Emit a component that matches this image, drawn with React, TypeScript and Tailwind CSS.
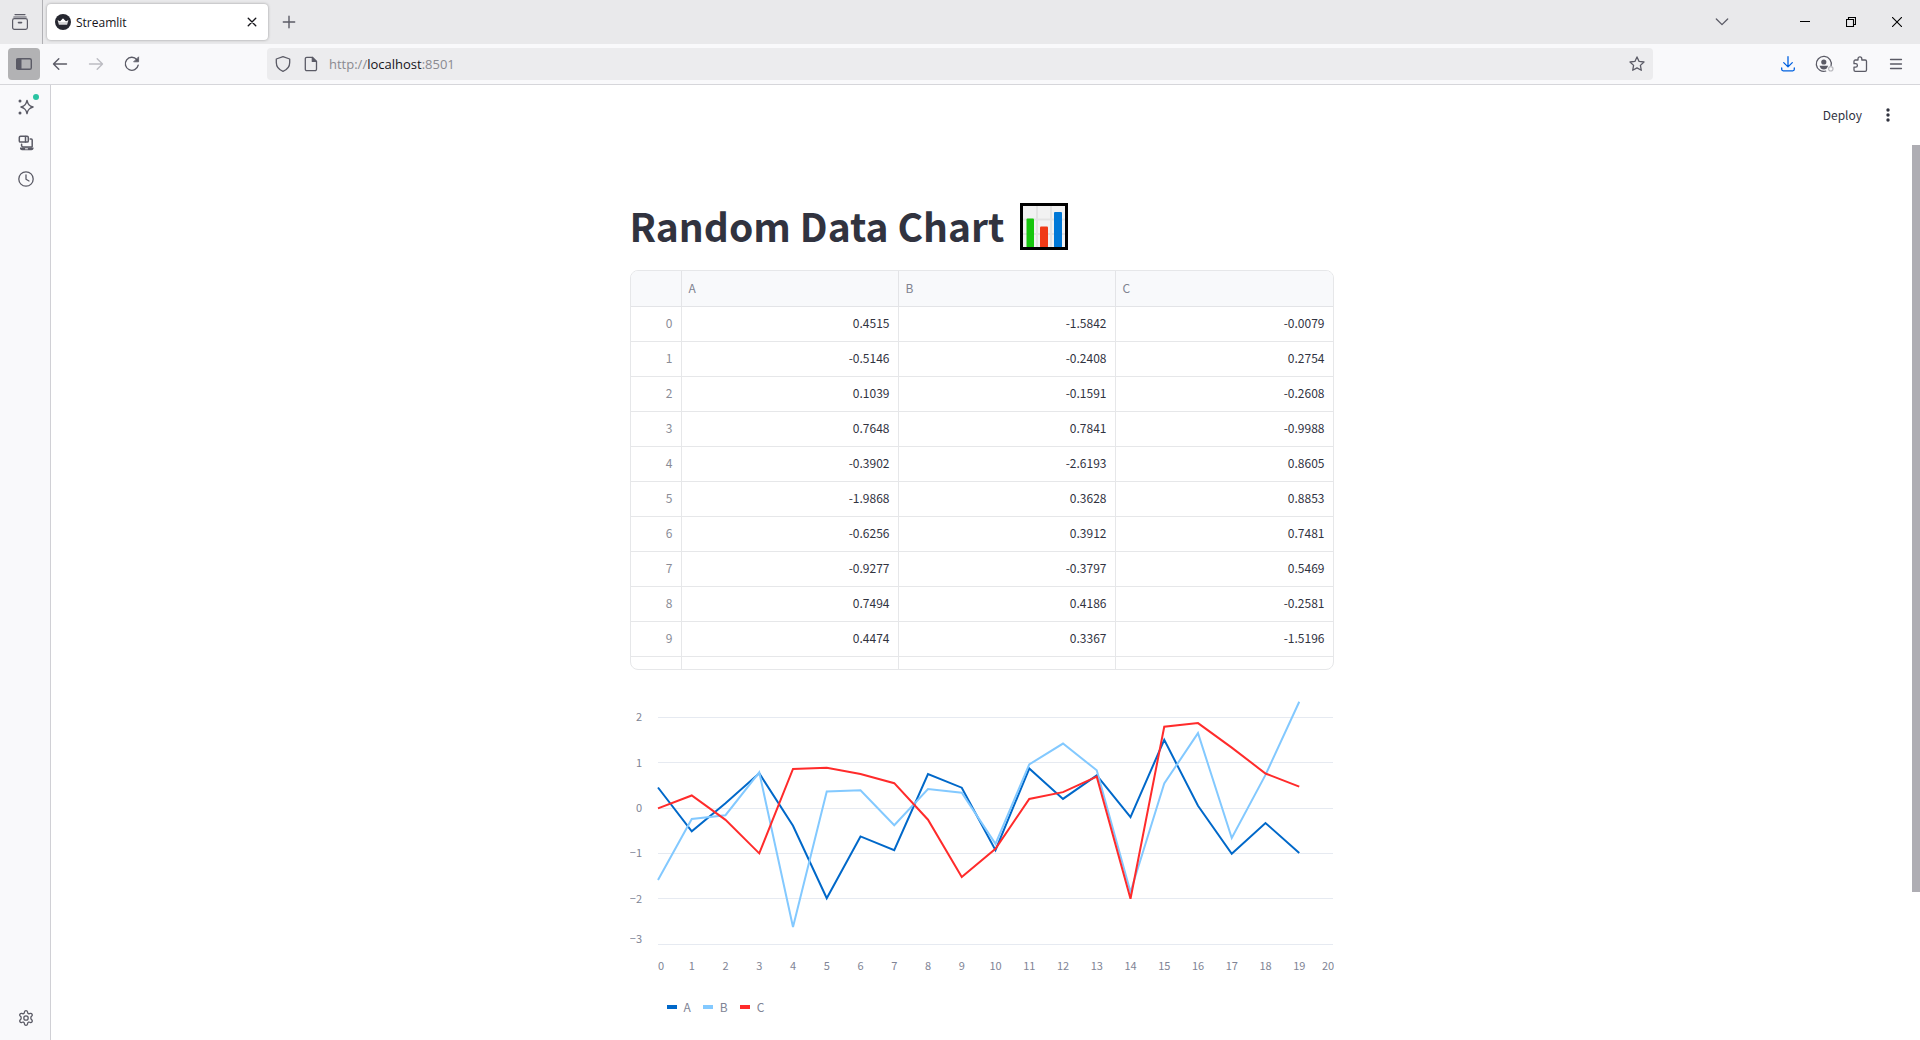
import type { ReactNode } from "react";

type Row = [number, number, number];

const data: Row[] = [
  [0.4515, -1.5842, -0.0079],
  [-0.5146, -0.2408, 0.2754],
  [0.1039, -0.1591, -0.2608],
  [0.7648, 0.7841, -0.9988],
  [-0.3902, -2.6193, 0.8605],
  [-1.9868, 0.3628, 0.8853],
  [-0.6256, 0.3912, 0.7481],
  [-0.9277, -0.3797, 0.5469],
  [0.7494, 0.4186, -0.2581],
  [0.4474, 0.3367, -1.5196],
  [-0.93, -0.79, -0.9],
  [0.87, 0.96, 0.2],
  [0.2, 1.42, 0.35],
  [0.72, 0.83, 0.69],
  [-0.2, -1.85, -2.0],
  [1.5, 0.54, 1.79],
  [0.05, 1.65, 1.87],
  [-1.01, -0.66, 1.33],
  [-0.33, 0.73, 0.76],
  [-0.99, 2.34, 0.47],
];

const columns = ["A", "B", "C"];
const series = [
  { name: "A", color: "#0068c9", swatch: "bg-[#0068c9]" },
  { name: "B", color: "#83c9ff", swatch: "bg-[#83c9ff]" },
  { name: "C", color: "#ff2b2b", swatch: "bg-[#ff2b2b]" },
];

function Icon({ children, size = 16, className = "" }: { children: ReactNode; size?: number; className?: string }) {
  return (
    <svg
      width={size}
      height={size}
      viewBox="0 0 16 16"
      fill="none"
      stroke="currentColor"
      strokeWidth="1.2"
      strokeLinecap="round"
      strokeLinejoin="round"
      aria-hidden="true"
      className={className}
    >
      {children}
    </svg>
  );
}

function IconButton({ label, children, className = "" }: { label: string; children: ReactNode; className?: string }) {
  return (
    <button type="button" aria-label={label} className={`flex size-8 shrink-0 items-center justify-center rounded ${className}`}>
      {children}
    </button>
  );
}

function TitleBar() {
  return (
    <div className="flex h-11 shrink-0 items-center bg-[#e9e9eb] text-[#5b5b66]">
      <div className="flex h-11 w-[43px] items-center justify-center border-r border-[#b0b0b4] pr-0.5">
        <IconButton label="Recent browsing">
          <Icon>
            <path d="M3 0.6h10M1.8 3h12.4" />
            <rect x="0.6" y="4.6" width="14.8" height="10.8" rx="1.8" />
            <path d="M6.5 8.6h3" strokeWidth="1.6" />
          </Icon>
        </IconButton>
      </div>
      <div className="ml-1 flex h-9 w-[221px] items-center rounded bg-white pl-2 shadow-[0_0_3px_rgba(0,0,0,0.35)]">
        <svg width="16" height="16" viewBox="0 0 16 16" aria-hidden="true">
          <circle cx="8" cy="8" r="8" fill="#262730" />
          <path d="M2.6 6.2 5 7.4 8 4.6l3 2.8 2.4-1.2-1.3 4.6H3.9z" fill="#d6d6d8" />
          <path d="M2.6 6.2 5 7.4 8 4.6l3 2.8 2.4-1.2L12 8H4z" fill="#fff" />
        </svg>
        <span className="ml-[5px] flex-1 pt-px font-['Open_Sans',sans-serif] text-xs text-[#15141a]">Streamlit</span>
        <IconButton label="Close tab" className="text-[#15141a]">
          <Icon size={10}>
            <path d="M2 2l12 12M14 2 2 14" strokeWidth="2.2" />
          </Icon>
        </IconButton>
      </div>
      <IconButton label="New tab" className="ml-[5px]">
        <Icon size={14}>
          <path d="M8 1.5v13M1.5 8h13" strokeWidth="1.6" />
        </Icon>
      </IconButton>
      <div className="flex-1" />
      <IconButton label="List all tabs" className="mr-[44px]">
        <Icon size={14}>
          <path d="M1.5 4.5 8 11l6.5-6.5" strokeWidth="1.5" />
        </Icon>
      </IconButton>
      <div className="flex text-black">
        <button type="button" aria-label="Minimize" className="flex h-11 w-[46px] items-center justify-center">
          <svg width="10" height="10" viewBox="0 0 10 10" aria-hidden="true">
            <path d="M0 4.5h10" stroke="currentColor" />
          </svg>
        </button>
        <button type="button" aria-label="Restore" className="flex h-11 w-[46px] items-center justify-center">
          <svg width="10" height="10" viewBox="0 0 10 10" fill="none" stroke="currentColor" aria-hidden="true">
            <path d="M0.5 2.5h7v7h-7zM2.5 2.5v-2h7v7h-2" strokeWidth="1.1" />
          </svg>
        </button>
        <button type="button" aria-label="Close" className="flex h-11 w-[46px] items-center justify-center">
          <svg width="10" height="10" viewBox="0 0 10 10" aria-hidden="true">
            <path d="M0 0l10 10M10 0 0 10" stroke="currentColor" strokeWidth="1.1" />
          </svg>
        </button>
      </div>
    </div>
  );
}

function Toolbar() {
  return (
    <div className="flex h-[41px] shrink-0 items-center border-b border-[#d6d6da] bg-[#f9f9fb] px-2 text-[#5b5b66]">
      <div className="flex w-[140px] shrink-0 items-center gap-1">
        <IconButton label="Toggle sidebar" className="bg-[#b2b2b4]">
          <Icon>
            <rect x="0.7" y="2.7" width="14.6" height="10.6" rx="1.6" strokeWidth="1.4" />
            <path d="M1 3h4v10H1z" fill="currentColor" strokeWidth="1" />
          </Icon>
        </IconButton>
        <IconButton label="Back">
          <Icon>
            <path d="M14.5 8H1.5M6.8 2.7 1.5 8l5.3 5.3" strokeWidth="1.4" />
          </Icon>
        </IconButton>
        <IconButton label="Forward" className="text-[#bcbcc2]">
          <Icon>
            <path d="M1.5 8h13M9.2 2.7 14.5 8l-5.3 5.3" strokeWidth="1.4" />
          </Icon>
        </IconButton>
        <IconButton label="Reload">
          <Icon>
            <path d="M14.2 9.2A6.5 6.5 0 1 1 12.8 3.6" strokeWidth="1.4" />
            <path d="M14.6 1.2v4.6H10z" fill="currentColor" strokeWidth="0.8" />
          </Icon>
        </IconButton>
      </div>
      <div className="mx-[119px] flex h-8 flex-1 items-center rounded bg-[#ececee] pl-2">
        <button type="button" aria-label="Tracking protection" className="mr-3">
          <Icon>
            <path d="M8 0.7 1.3 3v3.6c0 4 2.6 7.2 6.7 8.7 4.1-1.5 6.7-4.7 6.7-8.7V3z" strokeWidth="1.3" />
          </Icon>
        </button>
        <button type="button" aria-label="Site information" className="mr-[10px]">
          <Icon>
            <path d="M3.8 1.3h5.5l4.2 4.2v7.7a1.5 1.5 0 0 1-1.5 1.5H3.8a1.5 1.5 0 0 1-1.5-1.5V2.8a1.5 1.5 0 0 1 1.5-1.5z" strokeWidth="1.3" />
            <path d="M9.3 1.3v4.2h4.2z" fill="currentColor" />
          </Icon>
        </button>
        <label className="flex flex-1 items-center pt-0.5 font-['Open_Sans',sans-serif] text-[13px] text-[#8a8a90]">
          <span>http://</span>
          <input aria-label="Address" defaultValue="localhost" className="field-sizing-content bg-transparent text-[#15141a] outline-none" />
          <span>:8501</span>
        </label>
        <IconButton label="Bookmark this page">
          <Icon>
            <path d="m8 0.9 2.1 4.5 4.9.6-3.6 3.4.9 4.9L8 11.9l-4.3 2.4.9-4.9L1 6l4.9-.6z" strokeWidth="1.3" />
          </Icon>
        </IconButton>
      </div>
      <div className="flex shrink-0 items-center gap-1">
        <IconButton label="Downloads" className="text-[#0061e0]">
          <Icon>
            <path d="M8 0.7v10M3.7 6.6 8 10.9l4.3-4.3M1.7 12v1.3c0 .9.7 1.5 1.5 1.5h9.6c.8 0 1.5-.6 1.5-1.5V12" strokeWidth="1.3" />
          </Icon>
        </IconButton>
        <IconButton label="Account">
          <svg width="20" height="18" viewBox="0 0 20 18" fill="none" stroke="currentColor" aria-hidden="true">
            <path d="M17 11A7.5 7.5 0 1 0 12.200 16" strokeWidth="1.3" />
            <circle cx="9.800" cy="7" r="2.6" fill="currentColor" stroke="none" />
            <path d="M5.400 10.8h8.8l-1.500 2.6c-1.8 1.300-4 1.300-5.800 0z" fill="currentColor" stroke="none" />
            <circle cx="16.800" cy="13.800" r="2.200" stroke="#b9b9be" strokeWidth="1.200" />
          </svg>
        </IconButton>
        <IconButton label="Extensions">
          <Icon>
            <path
              d="M6 4V2.700a1.900 1.900 0 0 1 3.800 0V4h3.400a1.300 1.300 0 0 1 1.300 1.300v8.700a1.300 1.300 0 0 1-1.300 1.300H3.300A1.300 1.300 0 0 1 2 14v-2.900h1.700a1.700 1.700 0 0 0 0-3.400H2V5.300A1.300 1.300 0 0 1 3.300 4z"
              strokeWidth="1.300"
            />
          </Icon>
        </IconButton>
        <IconButton label="Menu">
          <Icon>
            <path d="M2.500 3.500h11M2.500 8h11M2.500 12.500h11" strokeWidth="1.300" />
          </Icon>
        </IconButton>
      </div>
    </div>
  );
}

function SideBar() {
  return (
    <nav aria-label="Sidebar" className="flex w-[51px] shrink-0 flex-col items-center gap-[4px] border-r border-[#d0d0d5] bg-[#f9f9fb] py-[6px] pl-[2px] text-[#5b5b66]">
      <IconButton label="Assistant" className="relative">
        <Icon>
          <path d="M9 1.500c.8 3.800 2 5.200 6 6.500-4 1.300-5.200 2.700-6 6.500-.8-3.800-2-5.200-6-6.500 4-1.300 5.200-2.700 6-6.500z" strokeWidth="1.500" />
          <circle cx="2" cy="1.900" r="1.500" fill="currentColor" stroke="none" />
          <circle cx="2" cy="14.100" r="1.500" fill="currentColor" stroke="none" />
        </Icon>
        <span className="absolute top-[3px] right-[3px] size-[6px] rounded-full bg-[#2ac3a2]" />
      </IconButton>
      <IconButton label="Synced tabs">
        <Icon>
          <rect x="1.300" y="1.300" width="9" height="5.800" rx="1.200" strokeWidth="1.500" />
          <path d="M7.500 1.500v5.500M12.200 4h1a1 1 0 0 1 1 1v6.500M3.600 9.200v1.800l1.200 1h9" strokeWidth="1.500" />
          <path d="M2 12.500h13.500v.8a2 2 0 0 1-2 2H4a2 2 0 0 1-2-2z" fill="currentColor" stroke="none" />
          <path d="M7.500 13.800h2" stroke="#f9f9fb" strokeWidth="1" />
        </Icon>
      </IconButton>
      <IconButton label="History">
        <Icon>
          <circle cx="8" cy="8" r="7.200" strokeWidth="1.300" />
          <path d="M8 3.800v4.400l3 1.800" strokeWidth="1.300" />
        </Icon>
      </IconButton>
      <div className="flex-1" />
      <IconButton label="Customize sidebar">
        <Icon>
          <path
            d="M6.500 1.800Q6.700.700 8 .700t1.500 1.100l.3 1.400 1.100.700 1.400-.500q1.100-.300 1.700.700t-.100 1.800l-1 1.100v1.900l1 1.100q.7.900.1 1.800t-1.700.7l-1.400-.5-1.100.7-.3 1.400Q9.300 15.300 8 15.300t-1.500-1.200l-.3-1.400-1.100-.7-1.400.5q-1.100.3-1.700-.7t.1-1.800l1-1.100V7l-1-1.100q-.7-.9-.1-1.800t1.700-.7l1.400.5 1.100-.7z"
            strokeWidth="1.300"
          />
          <circle cx="8" cy="8" r="2.200" strokeWidth="1.300" />
        </Icon>
      </IconButton>
    </nav>
  );
}

function BarChartGlyph() {
  return (
    <svg width="48" height="48" viewBox="0 0 48 48" role="img" aria-label="Bar chart">
      <rect x="1.500" y="1.500" width="45" height="44" fill="#f2f2f2" stroke="#000" strokeWidth="3" />
      <path d="M3 16.500h42M3 31h42M17 3v41M31 3v41" stroke="#e3e3e3" strokeWidth="2" />
      <rect x="6.500" y="15.500" width="7.500" height="29" rx="1" fill="#16c60c" />
      <rect x="20" y="23.500" width="8" height="21" rx="1" fill="#f03a17" />
      <rect x="34" y="9" width="8" height="35.500" rx="1" fill="#0078d7" />
      <path d="M0 45.500h48" stroke="#000" strokeWidth="3" />
    </svg>
  );
}

function DataTable() {
  return (
    <div className="h-[400px] overflow-hidden rounded-lg border border-[#e6e7e9]">
      <table className="w-full table-fixed border-separate border-spacing-0 text-xs">
        <thead>
          <tr className="h-9 bg-[#f8f9fb] text-left text-[#808390]">
            <th scope="col" aria-label="Index" className="w-[51px] border-r border-b border-[#e3e4e7]" />
            {columns.map((name) => (
              <th key={name} scope="col" className="border-b border-[#e3e4e7] px-[7px] pb-0.5 font-normal not-last:border-r">
                {name}
              </th>
            ))}
          </tr>
        </thead>
        <tbody>
          {data.slice(0, 11).map((row, index) => (
            <tr key={index} className="h-[35px] text-right text-[#31333f]">
              <th scope="row" className="border-r border-b border-[#e6e7e9] px-2 pb-0.5 font-normal text-[#8a8c96]">
                {index < 10 ? index : ""}
              </th>
              {row.map((value, column) => (
                <td key={column} className="border-b border-[#e6e7e9] px-2 pb-0.5 not-last:border-r">
                  {index < 10 ? value.toFixed(4) : ""}
                </td>
              ))}
            </tr>
          ))}
        </tbody>
      </table>
    </div>
  );
}

const plotLeft = 28;
const plotRight = 703;
const zeroY = 122;
const unitY = 45.4;
const xAt = (x: number) => plotLeft + (x * (plotRight - plotLeft)) / 20;
const yAt = (y: number) => zeroY - y * unitY;

function LineChart() {
  const yTicks = [2, 1, 0, -1, -2, -3];
  const xTicks = Array.from({ length: 21 }, (_, i) => i);
  return (
    <figure>
      <svg viewBox="0 0 704 294" className="block w-full" role="img" aria-label="Line chart of A, B and C">
        <g fill="#808495" fontSize="11" textAnchor="end">
          {yTicks.map((tick) => (
            <text key={tick} x="12" y={Math.round(yAt(tick)) + (tick === -3 ? -1 : 4)}>
              {tick < 0 ? `−${-tick}` : tick}
            </text>
          ))}
        </g>
        <g stroke="#e6eaf1">
          {yTicks.map((tick) => (
            <path key={tick} d={`M${plotLeft} ${Math.floor(yAt(tick)) + 0.5}H703`} />
          ))}
        </g>
        <g fill="#808495" fontSize="11" textAnchor="middle">
          {xTicks.map((tick) => (
            <text key={tick} x={tick === 0 ? 31 : tick === 20 ? 698 : xAt(tick)} y="284">
              {tick}
            </text>
          ))}
        </g>
        <g fill="none" strokeWidth="2">
          {series.map((item, column) => (
            <polyline
              key={item.name}
              stroke={item.color}
              points={data.map((row, index) => `${xAt(index)},${yAt(row[column])}`).join(" ")}
            />
          ))}
        </g>
      </svg>
      <figcaption className="mt-[19px] ml-[37px] flex gap-3 text-xs text-[#808495]">
        {series.map((item) => (
          <span key={item.name} className="flex items-center gap-[7px]">
            <span className={`h-1 w-[10px] ${item.swatch}`} />
            {item.name}
          </span>
        ))}
      </figcaption>
    </figure>
  );
}

export default function App() {
  return (
    <div className="flex h-screen flex-col overflow-hidden bg-white">
      <TitleBar />
      <Toolbar />
      <div className="flex min-h-0 flex-1">
        <SideBar />
        <div className="flex min-w-0 flex-1 flex-col font-['Noto_Sans_CJK_SC',sans-serif] text-[#31333f]">
          <header className="flex h-[60px] shrink-0 items-center justify-end gap-[10px] pr-4">
            <button type="button" className="text-xs">Deploy</button>
            <IconButton label="Main menu">
              <svg width="16" height="16" viewBox="0 0 16 16" fill="currentColor" aria-hidden="true">
                <circle cx="8" cy="3" r="1.700" />
                <circle cx="8" cy="8" r="1.700" />
                <circle cx="8" cy="13" r="1.700" />
              </svg>
            </IconButton>
          </header>
          <div className="flex min-h-0 flex-1">
            <main className="min-w-0 flex-1 overflow-hidden px-4 pt-[58px]">
              <div className="mx-auto max-w-[704px]">
                <h1 className="mb-[19px] flex h-12 items-center gap-4 text-[39px] leading-none font-bold">
                  <span className="pb-1">Random Data Chart</span>
                  <BarChartGlyph />
                </h1>
                <DataTable />
                <div className="mt-4">
                  <LineChart />
                </div>
              </div>
            </main>
            <div className="w-2 shrink-0">
              <div className="h-[747px] bg-[#aeadb3]" />
            </div>
          </div>
        </div>
      </div>
    </div>
  );
}
